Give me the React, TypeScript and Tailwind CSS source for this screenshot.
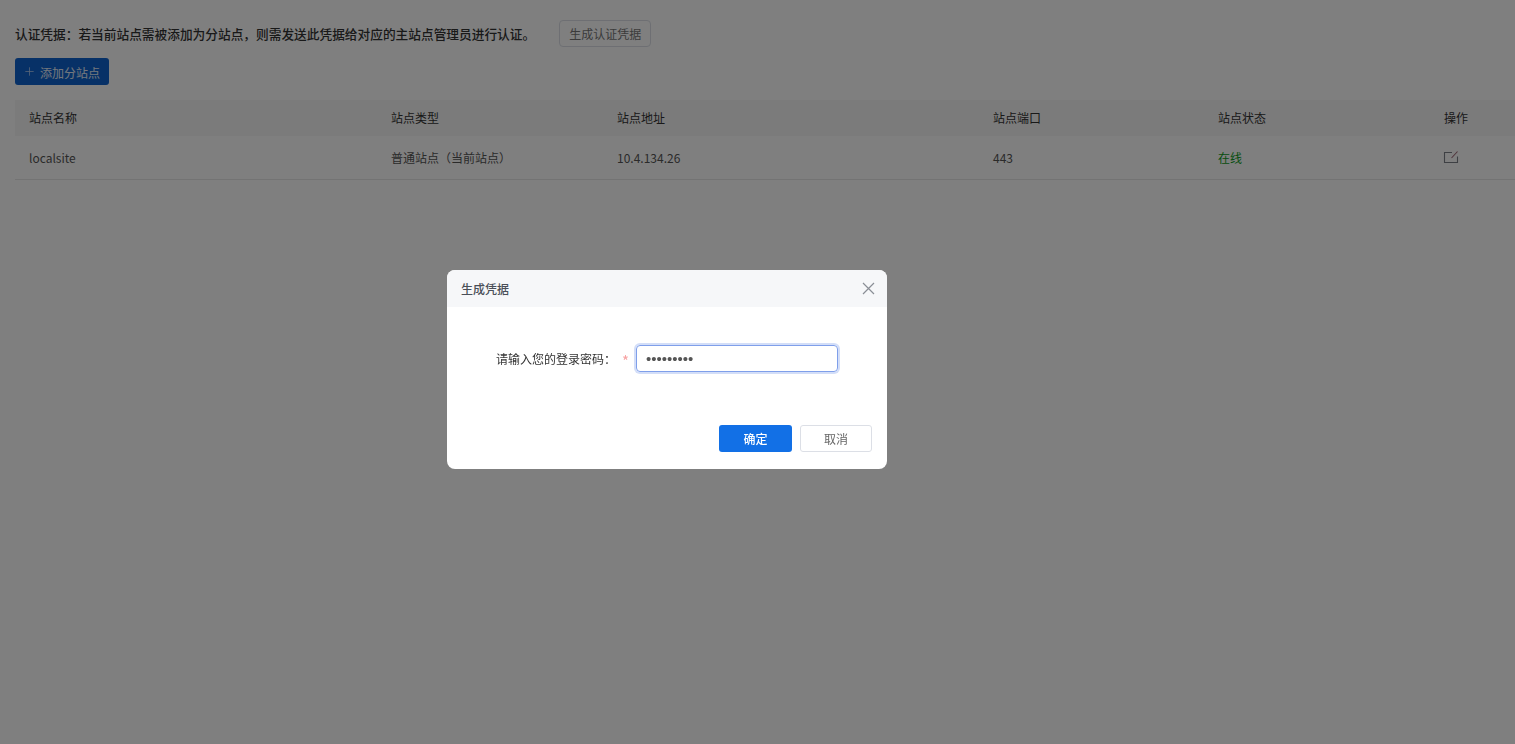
import { Plus } from 'lucide-react';

const font = { fontFamily: '"Noto Sans CJK SC", "Liberation Sans", sans-serif' };

const columns = [
    { title: '站点名称', value: 'localsite', width: 'w-[362px]' },
    { title: '站点类型', value: '普通站点（当前站点）', width: 'w-[226px]' },
    { title: '站点地址', value: '10.4.134.26', width: 'w-[376px]' },
    { title: '站点端口', value: '443', width: 'w-[225px]' },
    { title: '站点状态', value: '在线', width: 'w-[226px]' },
];

function EditIcon() {
    return (
        <svg width="16" height="14" viewBox="0 0 16 14" fill="none" stroke="#7c8189" strokeWidth="1.1" className="-ml-[1px] -mt-[2px]">
            <path d="M9 2.5H1.5V12.5H14.5V6.5" />
            <path d="M8.5 8L14.5 1.5" stroke="#a06a78" />
        </svg>
    );
}

function CloseIcon() {
    return (
        <svg width="13" height="13" viewBox="0 0 13 13" fill="none" stroke="#8a8e96" strokeWidth="1.2">
            <path d="M1 1L12 12M12 1L1 12" />
        </svg>
    );
}

export default function App() {
    return (
        <div className="w-[1515px] h-[744px] overflow-hidden bg-white text-[12px] text-[#333333]" style={font}>
            <div className="pl-[15px] pt-[20px]">
                <div className="flex items-center h-[27px]">
                    <span className="text-[12.7px] font-medium">认证凭据：若当前站点需被添加为分站点，则需发送此凭据给对应的主站点管理员进行认证。</span>
                    <button className="ml-[24px] w-[92px] h-[27px] border border-[#dcdfe6] rounded-[4px] text-[#777777]">生成认证凭据</button>
                </div>

                <button className="mt-[11px] flex items-center w-[94px] h-[27px] pl-[8px] bg-[#0f63cf] rounded-[3px] text-white">
                    <Plus size={13} strokeWidth={1.4} className="opacity-70" />
                    <span className="ml-[4px] pt-[2px] opacity-90">添加分站点</span>
                </button>

                {/* 站点列表 */}
                <div className="mt-[15px]">
                    <div className="flex items-center h-[36px] pl-[14px] bg-[#f6f6f6]">
                        {columns.map((c) => (
                            <div key={c.title} className={c.width}>{c.title}</div>
                        ))}
                        <div>操作</div>
                    </div>
                    <div className="flex items-center h-[44px] pl-[14px] border-b border-[#e6e6e6] text-[#555555]">
                        {columns.map((c) => (
                            <div key={c.title} className={`${c.width} ${c.value === '在线' ? 'text-[#0e9c1c]' : ''}`}>{c.value}</div>
                        ))}
                        <EditIcon />
                    </div>
                </div>
            </div>

            {/* 遮罩 + 弹窗 */}
            <div className="fixed inset-0 bg-black/50 pl-[447px] pt-[270px]">
                <div className="w-[440px] h-[199px] bg-white rounded-[8px] overflow-hidden flex flex-col">
                    <div className="flex items-center justify-between h-[37px] pl-[14px] pr-[12px] bg-[#f6f7f9]">
                        <span className="font-medium text-[#4a4f58]">生成凭据</span>
                        <CloseIcon />
                    </div>
                    <div className="flex items-center mt-[38px] pl-[49px]">
                        <label className="w-[120px]">请输入您的登录密码：</label>
                        <span className="w-[20px] pl-[6px] pt-[3px] text-[15px] leading-none text-[#f7a3a3]">*</span>
                        <input
                            type="password"
                            defaultValue="123456789"
                            className="w-[202px] h-[27px] pl-[9px] pr-[9px] border border-[#7f9fea] rounded-[4px] shadow-[0_0_0_2px_#d3def8] outline-none text-[15px] text-[#555555] font-['Liberation_Sans']"
                        />
                    </div>
                    <div className="flex justify-end gap-[8px] mt-auto mb-[17px] pr-[15px]">
                        <button className="w-[73px] h-[27px] bg-[#1270e6] rounded-[3px] text-white font-medium">确定</button>
                        <button className="w-[72px] h-[27px] border border-[#dcdfe6] rounded-[3px] text-[#666666]">取消</button>
                    </div>
                </div>
            </div>
        </div>
    );
}
